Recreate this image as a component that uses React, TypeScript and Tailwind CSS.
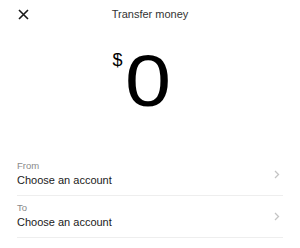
import React from "react";

function Row({ label }: { label: string }) {
	return (
		<div className="flex items-center justify-between border-b border-[#eeeeee] pt-[5px] pb-[6px]">
			<div className="flex flex-col">
				<span className="text-[9.5px] leading-[13px] text-[#8a8a8a]">{label}</span>
				<span className="text-[11px] leading-[17px] text-[#1a1a1a]">Choose an account</span>
			</div>
			<svg width="6" height="9" viewBox="0 0 6 9" className="mr-[3px]">
				<path d="M1 1l3.5 3.5L1 8" fill="none" stroke="#c4c4c4" strokeWidth="1.3" />
			</svg>
		</div>
	);
}

export default function App() {
	return (
		<div className="w-[300px] h-[248px] bg-white font-['Liberation_Sans',Arial,sans-serif] overflow-hidden">
			{/* header */}
			<div className="relative flex items-center justify-center h-[28px]">
				<svg width="11" height="11" viewBox="0 0 11 11" className="absolute left-[18px] top-[9px]">
					<path d="M1 1l9 9M10 1l-9 9" stroke="#1a1a1a" strokeWidth="1.6" />
				</svg>
				<span className="text-[11px] text-[#333333]">Transfer money</span>
			</div>

			{/* amount */}
			<div className="flex justify-center items-start mt-[17px] h-[94px] pr-[19px]">
				<span className="text-[18px] leading-none mt-[6px] mr-[6px] text-black">$</span>
				<span className="text-[72px] leading-none text-black scale-x-[1.15]">0</span>
			</div>

			{/* accounts */}
			<div className="flex flex-col px-[17px] mt-[15px]">
				<Row label="From" />
				<Row label="To" />
			</div>
		</div>
	);
}
